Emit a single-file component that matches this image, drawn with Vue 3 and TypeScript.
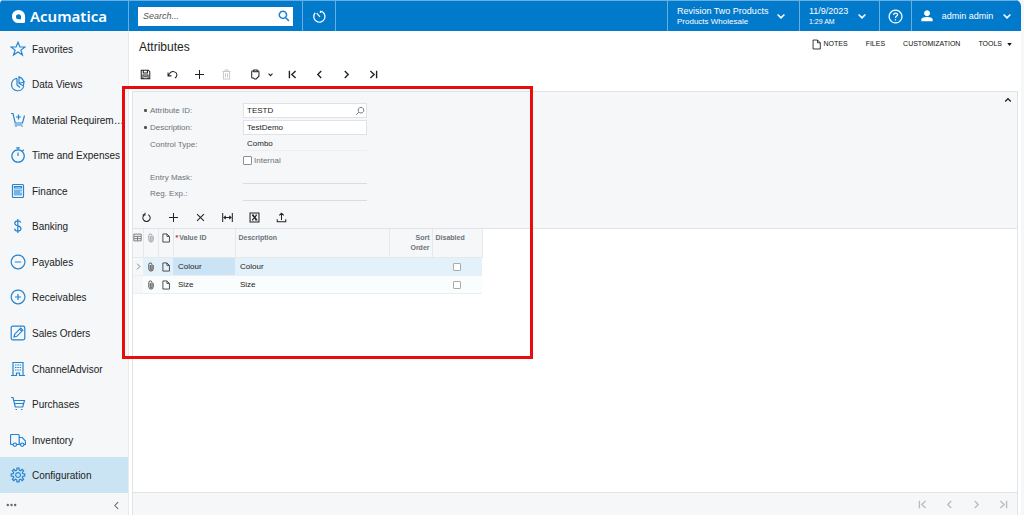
<script setup lang="ts">
import { ref } from 'vue'

interface MenuItem { label: string; icon: string }
interface Tool { name: string; icon: string; disabled?: boolean }
interface Row { valueId: string; description: string; disabled: boolean }

const icons: Record<string, string> = {
  star: 'M8 1.2 9.9 6H15l-4.1 3.1 1.6 5L8 11l-4.5 3.1 1.6-5L1 6h5.1Z',
  pie: 'M7 2.400a6.200 6.200 0 1 0 6.800 7.400M7 2.400V9l3 2.500M9 .800v6.700l4.300 2.200A6.500 6.500 0 0 0 9 .800ZM9 7.500l5.800-2',
  cartPlus: 'M1 1.500h2l2.200 9.500h7.300l2-7.500M4.500 13h8M8.500 2.500v5M6 5h5M5.500 14.500h1M11.500 14.500h1',
  stopwatch: 'M8 2.800a6.200 6.200 0 1 0 .1 0ZM6.200 .800h3.600M8 1v2M8 5.500V9M12.500 4l1.300-1.300',
  calculator: 'M3.500 1.500h9q1 0 1 1v11q0 1-1 1h-9q-1 0-1-1v-11q0-1 1-1ZM4.500 3.500h7v1.500h-7ZM5 6.500v6M7 6.500v6M9 6.500v6M11 6.500v2M11 9.500v3',
  dollar: 'M10.800 4.600C10.400 2.900 9 2.800 7.800 2.800 5.800 2.800 4.800 3.800 4.800 5.200c0 3.400 6.200 1.900 6.200 5.300 0 1.500-1.300 2.500-3.200 2.500-1.800 0-3-.8-3.200-2.400M7.800 1v14',
  minus: 'M8 1.200a6.800 6.800 0 1 0 .1 0ZM4.800 8h6.400',
  plusCircle: 'M8 1.200a6.800 6.800 0 1 0 .1 0ZM5 8h6M8 5v6',
  edit: 'M3 1.200h10q1.800 0 1.800 1.800v10q0 1.800-1.800 1.800H3q-1.800 0-1.800-1.800V3q0-1.800 1.800-1.800ZM4 12l.7-2.800 6-6 2.100 2.100-6 6ZM9.700 4.200l2.100 2.100',
  building: 'M3 14V1.500h10V14M1 14.500h5.500V12h3v2.500H15M5 4h1.500M7.300 4h1.500M9.600 4h1.500M5 6.500h1.500M7.300 6.500h1.500M9.600 6.500h1.500M5 9h1.500M7.300 9h1.500M9.600 9h1.500',
  cart: 'M1 1.500h2l2.300 9.500h7.400l1.800-6.500H4M4.500 7.500h9M5.500 13.500h1.500M11 13.500h1.500',
  truck: 'M2.800 12.500H1.500q-1 0-1-1v-8q0-1 1-1h6.700q1 0 1 1v9H6.800M9.200 5.500h3l3.300 3.500v3.500h-1.300M9.200 12.500h1M4.800 11a1.700 1.700 0 1 0 .1 0ZM12.200 11a1.700 1.700 0 1 0 .1 0Z',
  gear: 'M6.700 3.200 7 1.200h2l.3 2 1.200.5 1.700-1.300 1.400 1.400-1.300 1.700.5 1.200 2 .3v2l-2 .3-.5 1.200 1.300 1.700-1.400 1.400-1.700-1.300-1.200.5-.3 2H7l-.3-2-1.200-.5-1.700 1.300-1.400-1.400 1.300-1.700-.5-1.200-2-.3V7l2-.3.5-1.200-1.300-1.700 1.400-1.400 1.700 1.300ZM8 5.600a2.400 2.400 0 1 0 .1 0Z',
  save: 'M1.800 1.800h10.400l2 2v10.400H1.800ZM4.800 2v3.700h6V2M4.300 14V8.700h7.400V14M6 11.300h4',
  undo: 'M1.500 5v5h5M2 9.500C4.500 4.500 8 3 11 4.200c4.500 1.800 4.500 6 .5 9',
  plus: 'M8 1.500v13M1.500 8h13',
  trash: 'M2 3.500h12M6 3.500v-2h4v2M3.500 3.500v11h9v-11M6.500 6v6M9.500 6v6',
  clipboard: 'M5.500 3h-2q-1 0-1 1v8q0 1 1 1h1.500l1.500 1.500h2.500l4-4V4q0-1-1-1h-2M5.500 1.600h5v2.400h-5Z',
  chevronDown: 'M3.500 6 8 10.500 12.500 6',
  chevronUp: 'M3.500 10.500 8 6l4.500 4.500',
  first: 'M3.500 2.500v11M12.500 3 7 8l5.500 5',
  prev: 'M10.500 3 5.500 8l5 5',
  next: 'M5.500 3l5 5-5 5',
  last: 'M12.500 2.500v11M3.500 3 9 8l-5.500 5',
  refresh: 'M10.500 3.800a5.300 5.300 0 1 1-5 0M5.800 1v3.200H2.500',
  close: 'M3 3l10 10M13 3 3 13',
  fit: 'M1 1.500v13M15 1.500v13M3 8h10M5.500 5.800 3 8l2.500 2.200M10.500 5.800 13 8l-2.500 2.200',
  excel: 'M1.500 1.500h13v13h-13ZM5 4.500l5.500 7M6 4.500l5.500 7M11 4.500l-6 7M4.300 4.500h3M9.500 4.500h2M4.300 11.500h2M9 11.500h3',
  upload: 'M8 11.500V2M4.800 5 8 1.800 11.200 5M1.800 10.500v3.700h12.400v-3.700',
  page: 'M3 1.500h6.500l4 4v9H3ZM9.500 1.500v4h4',
  clip: 'M11.500 5v6a3.500 3.500 0 0 1-7 0V4a2.500 2.500 0 0 1 5 0v7a1.300 1.300 0 0 1-2.600 0V5',
  search: 'M6.500 1.700a4.800 4.800 0 1 0 .1 0ZM10 10l4.500 4.500',
  lookup: 'M9.500 2.200a4.500 4.500 0 1 0 .1 0ZM6.200 9.800 2 14',
  history: 'M9 2.200A6 6 0 1 1 3.500 4M8.500 8.500 5 4.500M9 2.200v2',
  help: 'M8 1.200a6.800 6.800 0 1 0 .1 0ZM6 6.500c0-3 4.200-2.700 4.200-.4C10.200 7.600 8 7.600 8 9.500M8 11v1.300',
  columns: 'M1.500 2h13v12h-13ZM1.500 6h13M1.500 10h13M8 6v8',
}

const menu: MenuItem[] = [
  { label: 'Favorites', icon: 'star' },
  { label: 'Data Views', icon: 'pie' },
  { label: 'Material Requirem…', icon: 'cartPlus' },
  { label: 'Time and Expenses', icon: 'stopwatch' },
  { label: 'Finance', icon: 'calculator' },
  { label: 'Banking', icon: 'dollar' },
  { label: 'Payables', icon: 'minus' },
  { label: 'Receivables', icon: 'plusCircle' },
  { label: 'Sales Orders', icon: 'edit' },
  { label: 'ChannelAdvisor', icon: 'building' },
  { label: 'Purchases', icon: 'cart' },
  { label: 'Inventory', icon: 'truck' },
  { label: 'Configuration', icon: 'gear' },
]
const active = ref('Configuration')

const nav: Tool[] = [
  { name: 'First', icon: 'first' },
  { name: 'Previous', icon: 'prev' },
  { name: 'Next', icon: 'next' },
  { name: 'Last', icon: 'last' },
]
const editTools: Tool[] = [
  { name: 'Save', icon: 'save' },
  { name: 'Undo', icon: 'undo' },
  { name: 'Add', icon: 'plus' },
  { name: 'Delete', icon: 'trash', disabled: true },
]
const gridTools: Tool[] = [
  { name: 'Refresh', icon: 'refresh' },
  { name: 'Add row', icon: 'plus' },
  { name: 'Delete row', icon: 'close' },
  { name: 'Fit to screen', icon: 'fit' },
  { name: 'Export to Excel', icon: 'excel' },
  { name: 'Load records', icon: 'upload' },
]

const attributeId = ref('TESTD')
const description = ref('TestDemo')
const internal = ref(false)
const entryMask = ref('')
const regExp = ref('')
const rows = ref<Row[]>([
  { valueId: 'Colour', description: 'Colour', disabled: false },
  { valueId: 'Size', description: 'Size', disabled: false },
])
</script>

<template>
  <div class="app">
    <header class="topbar">
      <a class="brand" href="#">
        <svg class="logo" viewBox="0 0 16 16"><path fill-rule="evenodd" d="M8 1A7 7 0 0 1 15 8v5.500q0 1.500-1.500 1.500H8A7 7 0 0 1 8 1Zm0 4.500a2.700 2.700 0 1 0 0 5.400h2.700V8.200A2.700 2.700 0 0 0 8 5.500Z" /></svg>
        <span>Acumatica</span>
      </a>
      <div class="search-area">
        <div class="search">
          <input type="search" placeholder="Search..." aria-label="Search" />
          <button type="button" aria-label="Search"><svg class="ico bold" viewBox="0 0 16 16"><path :d="icons.search" /></svg></button>
        </div>
      </div>
      <button class="cell history" type="button" aria-label="Recent"><svg class="ico lg" viewBox="0 0 16 16"><path :d="icons.history" /></svg></button>
      <div class="spacer"></div>
      <button class="cell tenant" type="button">
        <span class="two"><span class="big">Revision Two Products</span><span>Products Wholesale</span></span>
        <svg class="ico chev" viewBox="0 0 16 16"><path :d="icons.chevronDown" /></svg>
      </button>
      <button class="cell date" type="button">
        <span class="two"><span class="big">11/9/2023</span><span class="time">1:29 AM</span></span>
        <svg class="ico chev" viewBox="0 0 16 16"><path :d="icons.chevronDown" /></svg>
      </button>
      <button class="cell help" type="button" aria-label="Help"><svg class="ico lg" viewBox="0 0 16 16"><path :d="icons.help" /></svg></button>
      <button class="cell user" type="button">
        <svg class="person" viewBox="0 0 16 16"><path d="M8 1.500a3.400 3.400 0 1 0 .1 0ZM1.500 14v-2q0-3 6.500-3t6.500 3v2Z" /></svg>
        <span>admin admin</span>
        <svg class="ico chev" viewBox="0 0 16 16"><path :d="icons.chevronDown" /></svg>
      </button>
    </header>

    <div class="body">
      <nav class="sidebar">
        <a v-for="item in menu" :key="item.label" href="#" class="item" :class="{ active: active === item.label }" @click.prevent="active = item.label">
          <svg class="ico" viewBox="0 0 16 16"><path :d="icons[item.icon]" /></svg>
          <span>{{ item.label }}</span>
        </a>
        <div class="side-foot">
          <button type="button" aria-label="More items"><svg class="dots" viewBox="0 0 12 4"><circle cx="2" cy="2" r="1.300" /><circle cx="6" cy="2" r="1.300" /><circle cx="10" cy="2" r="1.300" /></svg></button>
          <button type="button" aria-label="Collapse menu"><svg class="ico tool" viewBox="0 0 16 16"><path :d="icons.prev" /></svg></button>
        </div>
      </nav>

      <main class="main">
        <div class="title-row">
          <h1>Attributes</h1>
          <div class="links">
            <a href="#"><svg class="ico note" viewBox="0 0 16 16"><path :d="icons.page" /></svg>NOTES</a>
            <a href="#">FILES</a>
            <a href="#">CUSTOMIZATION</a>
            <a href="#">TOOLS<svg class="caret" viewBox="0 0 6 4"><path d="M0 0h6L3 4Z" /></svg></a>
          </div>
        </div>
        <div class="toolbar">
          <button v-for="t in editTools" :key="t.name" type="button" :aria-label="t.name" :disabled="t.disabled"><svg class="ico tool" viewBox="0 0 16 16"><path :d="icons[t.icon]" /></svg></button>
          <button class="wide" type="button" aria-label="Clipboard">
            <svg class="ico tool" viewBox="0 0 16 16"><path :d="icons.clipboard" /></svg>
            <svg class="ico small" viewBox="0 0 16 16"><path :d="icons.chevronDown" /></svg>
          </button>
          <button v-for="t in nav" :key="t.name" type="button" :aria-label="t.name"><svg class="ico tool strong" viewBox="0 0 16 16"><path :d="icons[t.icon]" /></svg></button>
        </div>

        <section class="content">
          <div class="panel">
            <form class="form" @submit.prevent>
              <label class="req" for="attr-id">Attribute ID:</label>
              <div class="box">
                <input id="attr-id" v-model="attributeId" type="text" />
                <button type="button" aria-label="Select attribute"><svg class="ico look" viewBox="0 0 16 16"><path :d="icons.lookup" /></svg></button>
              </div>
              <label class="req" for="descr">Description:</label>
              <div class="box"><input id="descr" v-model="description" type="text" /></div>
              <label for="ctl">Control Type:</label>
              <div class="line faint"><select id="ctl"><option>Combo</option></select></div>
              <label class="check"><input v-model="internal" type="checkbox" />Internal</label>
              <label for="mask">Entry Mask:</label>
              <div class="line"><input id="mask" v-model="entryMask" type="text" /></div>
              <label for="regexp">Reg. Exp.:</label>
              <div class="line"><input id="regexp" v-model="regExp" type="text" /></div>
            </form>
            <button class="collapse" type="button" aria-label="Collapse form"><svg class="ico look strong" viewBox="0 0 16 16"><path :d="icons.chevronUp" /></svg></button>
            <div class="toolbar grid-tools">
              <button v-for="t in gridTools" :key="t.name" type="button" :aria-label="t.name"><svg class="ico tool" viewBox="0 0 16 16"><path :d="icons[t.icon]" /></svg></button>
            </div>
          </div>

          <table class="grid">
            <colgroup><col class="c-mark" /><col class="c-icon" /><col class="c-icon" /><col class="c-value" /><col class="c-desc" /><col class="c-sort" /><col class="c-dis" /></colgroup>
            <thead>
              <tr>
                <th class="i"><svg class="ico tiny" viewBox="0 0 16 16"><path :d="icons.columns" /></svg></th>
                <th class="i"><svg class="ico mini pale" viewBox="0 0 16 16"><path :d="icons.clip" /></svg></th>
                <th class="i"><svg class="ico mini" viewBox="0 0 16 16"><path :d="icons.page" /></svg></th>
                <th class="value"><span class="star">*</span>Value ID</th>
                <th>Description</th>
                <th class="sort">Sort Order</th>
                <th>Disabled</th>
              </tr>
            </thead>
            <tbody>
              <tr v-for="(row, i) in rows" :key="row.valueId" :class="{ selected: i === 0 }">
                <td class="i mark"><svg v-if="i === 0" class="ico tiny" viewBox="0 0 16 16"><path :d="icons.next" /></svg></td>
                <td class="i"><svg class="ico mini" viewBox="0 0 16 16"><path :d="icons.clip" /></svg></td>
                <td class="i"><svg class="ico mini" viewBox="0 0 16 16"><path :d="icons.page" /></svg></td>
                <td class="value">{{ row.valueId }}</td>
                <td>{{ row.description }}</td>
                <td></td>
                <td class="tick"><input v-model="row.disabled" type="checkbox" :aria-label="'Disabled: ' + row.valueId" /></td>
              </tr>
            </tbody>
          </table>

          <footer class="pager">
            <button v-for="t in nav" :key="t.name" type="button" :aria-label="t.name + ' page'"><svg class="ico tool strong" viewBox="0 0 16 16"><path :d="icons[t.icon]" /></svg></button>
          </footer>
        </section>
        <div class="highlight"></div>
      </main>
    </div>
  </div>
</template>

<style>
body { margin: 0; background: #f6f7f9; }
</style>

<style scoped>
* { box-sizing: border-box; }
.app { height: 100vh; margin-right: 3px; display: flex; flex-direction: column; font-family: "Liberation Sans", Arial, sans-serif; font-size: 8px; color: #222; border-radius: 4px 6px 4px 4px; overflow: hidden; background: #fff; }
button { border: 0; padding: 0; margin: 0; background: none; font: inherit; color: inherit; display: flex; align-items: center; justify-content: center; }
a { color: inherit; text-decoration: none; }
input, select { font: inherit; color: #1c1c1c; }
.ico { width: 16px; height: 16px; fill: none; stroke: currentColor; stroke-width: 1.2; flex: none; display: block; }
.ico.tool { width: 11px; height: 11px; stroke-width: 1.500; }
.ico.look { width: 10px; height: 10px; stroke-width: 1.500; }
.ico.note { width: 11px; height: 11px; stroke-width: 1.200; }
.ico.strong { stroke-width: 2; }
.ico.small { width: 7px; height: 7px; stroke-width: 2.600; }
.ico.mini { width: 10px; height: 10px; stroke-width: 1.500; }
.ico.tiny { width: 9px; height: 9px; stroke-width: 1.600; color: #707478; margin: 0 auto; }
.ico.pale { color: #9a9da1; }
.ico.lg { width: 15px; height: 15px; stroke-width: 1.300; }
.ico.chev { width: 12px; height: 12px; stroke-width: 2.200; }
.ico.bold { width: 12px; height: 12px; stroke-width: 2; color: #1a84d2; }

.topbar { height: 31px; flex: none; display: flex; background: #027acc; color: #fff; border-top: 1px solid #69afe0; }
.brand { width: 129px; display: flex; align-items: center; gap: 4px; padding-left: 11px; border-right: 1px solid #66afe0; font: 600 15px/20px "Noto Sans", sans-serif; }
.logo { width: 15px; height: 15px; fill: #fff; }
.search-area { width: 173px; display: flex; align-items: center; padding: 0 9px; }
.search { flex: 1; height: 19px; background: #fff; display: flex; align-items: center; padding: 0 3px 0 5px; }
.search input { flex: 1; min-width: 0; border: 0; outline: 0; padding: 0; background: none; font-size: 9px; font-style: italic; }
.search input::placeholder { color: #555; opacity: 1; }
.cell { border-left: 1px solid #66afe0; }
.history { width: 34px; border-right: 1px solid #66afe0; }
.spacer { flex: 1; }
.two { display: flex; flex-direction: column; text-align: left; line-height: 10px; flex: 1; white-space: nowrap; }
.two .big { font-size: 9px; line-height: 11px; }
.two .time { font-size: 7px; }
.tenant { width: 132px; padding: 0 12px 0 9px; }
.date { width: 80px; padding: 0 11px 0 9px; }
.help { width: 32px; }
.user { width: 110px; padding: 0 8px; font-size: 9px; justify-content: space-between; }
.person { width: 14px; height: 14px; fill: #fff; }

.body { flex: 1; min-height: 0; display: flex; }
.sidebar { width: 129px; flex: none; display: flex; flex-direction: column; background: #f5f7f9; border-right: 1px solid #e8eaec; }
.item { flex: 1; display: flex; align-items: center; gap: 6px; padding: 0 4px 0 10px; font-size: 10px; color: #222; }
.item .ico { color: #2584d0; }
.item span { flex: 1; min-width: 0; white-space: nowrap; line-height: 14px; padding-top: 2px; }
.item.active { background: #cbe4f4; }
.side-foot { height: 22px; display: flex; align-items: center; justify-content: space-between; padding: 3px 6px 0; color: #666; }
.dots { width: 11px; height: 4px; fill: #666; }

.main { flex: 1; min-width: 0; display: flex; flex-direction: column; padding: 0 3px; position: relative; }
.title-row { height: 32px; display: flex; justify-content: space-between; padding: 0 6px 0 7px; }
h1 { margin: 0; font-size: 12px; font-weight: 400; line-height: 32px; }
.links { display: flex; gap: 18px; font-size: 7px; line-height: 26px; height: 26px; color: #111; }
.links a { display: flex; align-items: center; gap: 2px; }
.caret { width: 5px; height: 3px; margin-left: 3px; fill: #111; }
.toolbar { display: flex; align-items: center; height: 22px; color: #222; }
.toolbar button { width: 27px; height: 20px; }
.toolbar button:disabled { color: #c8cacc; }
.toolbar .wide { width: 39px; gap: 6px; padding-left: 4px; }

.content { flex: 1; display: flex; flex-direction: column; margin-top: 6px; border: 1px solid #e0e3e7; border-bottom: 0; }
.panel { display: grid; grid-template-columns: 1fr auto; background: #f5f7f9; border-bottom: 1px solid #e0e3e7; }
.form { display: grid; grid-template-columns: 93px 124px; grid-template-rows: 15px 15px 14px 15px 14px 15px; row-gap: 2px; padding: 11px 0 5px 17px; color: #6d7277; }
.form label { display: flex; align-items: center; }
.req::before { content: ""; width: 3px; height: 3px; margin-left: -6px; margin-right: 3px; border-radius: 1px; background: #555; }
.box { display: flex; align-items: center; background: #fff; border: 1px solid #dfe2e6; padding: 0 1px 0 3px; }
.form input[type="text"], .form select { flex: 1; min-width: 0; width: 100%; height: 12px; padding: 0; border: 0; outline: 0; background: none; appearance: none; }
.line { border-bottom: 1px solid #d9dce0; padding-left: 4px; display: flex; align-items: center; }
.line.faint { border-color: #eceef0; }
.form .check { grid-column: 2; gap: 2px; }
input[type="checkbox"] { appearance: none; width: 9px; height: 9px; margin: 0; border: 1px solid #8d9093; border-radius: 1px; background: #fff; }
.collapse { width: 18px; height: 16px; align-self: start; }
.grid-tools { grid-column: 1 / -1; height: 22px; }

.grid { width: 349px; table-layout: fixed; border-collapse: collapse; line-height: 10px; }
.c-mark { width: 10px; }
.c-icon { width: 15px; }
.c-value { width: 62px; }
.c-desc { width: 154px; }
.c-sort { width: 43px; }
.c-dis { width: 50px; }
th, td { padding: 1px 5px 0; text-align: left; }
th { height: 28px; padding: 4px 3px 0; vertical-align: top; background: #f5f7f9; color: #6d7277; font-size: 7px; font-weight: 700; border-right: 1px solid #e6e9ec; border-bottom: 1px solid #e6e9ec; }
th.sort { text-align: right; padding-left: 12px; padding-right: 2px; }
th.value { padding-left: 2px; white-space: nowrap; }
.star { color: #e02020; margin-right: 1px; }
th.i, td.i { padding-left: 0; padding-right: 0; color: #444; }
.i .ico { margin: 0 auto; }
td { height: 18px; background: #f9fdfe; color: #1c1c1c; border-bottom: 1px solid #eceff1; }
td.mark { background: #f5f7f9; }
.selected td { background: #e3f1fa; }
.selected td.mark { background: #f5f7f9; }
.selected td.value { background: #cbe4f5; }
.tick input { display: block; width: 8px; height: 8px; margin: 0 auto; border-color: #aaa; }
.pager { margin-top: auto; height: 23px; display: flex; align-items: center; justify-content: flex-end; background: #f5f7f9; border-top: 1px solid #e0e3e7; color: #b9bcc0; }
.pager button { width: 27px; }
.highlight { position: absolute; left: -7px; top: 55px; width: 411px; height: 273px; border: 3px solid #e90c0c; pointer-events: none; }
</style>
